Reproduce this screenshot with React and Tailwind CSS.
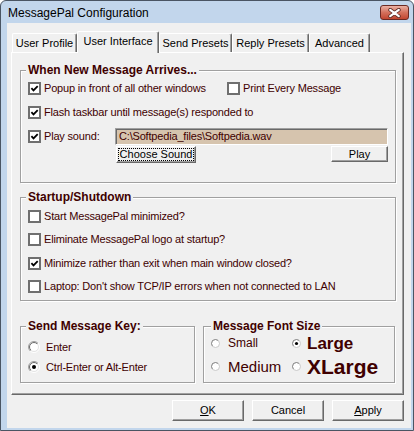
import React from "react";

const tabs = [
  { label: "User Profile", w: "w-[65px]" },
  { label: "User Interface", w: "w-[82px]", active: true },
  { label: "Send Presets", w: "w-[73px]" },
  { label: "Reply Presets", w: "w-[77px]" },
  { label: "Advanced", w: "w-[61px]" },
];

const CheckBox = ({ checked }) => (
  <span className="w-[13px] h-[13px] shrink-0 border-2 border-[#6f6f6f] bg-white flex items-center justify-center">
    {checked && (
      <svg width="9" height="9" viewBox="0 0 9 9">
        <path d="M1.4 4.2 L3.5 6.4 L7.7 2.1" fill="none" stroke="#000" strokeWidth="1.8" />
      </svg>
    )}
  </span>
);

const Check = ({ label, checked, className = "" }) => (
  <label className={`flex items-center gap-[3px] ${className}`}>
    <CheckBox checked={checked} />
    <span className="text-[11px] leading-[13px] tracking-[-0.18px] text-[#400000] whitespace-nowrap">{label}</span>
  </label>
);

const Radio = ({ checked }) => (
  <svg width="12" height="12" viewBox="0 0 12 12" className="shrink-0">
    <defs>
      <linearGradient id="ro" x1="0" y1="0" x2="1" y2="1">
        <stop offset="0.5" stopColor="#a0a0a0" />
        <stop offset="0.5" stopColor="#ffffff" />
      </linearGradient>
      <linearGradient id="ri" x1="0" y1="0" x2="1" y2="1">
        <stop offset="0.5" stopColor="#696969" />
        <stop offset="0.5" stopColor="#e3e3e3" />
      </linearGradient>
    </defs>
    <circle cx="6" cy="6" r="5.5" fill="none" stroke="url(#ro)" strokeWidth="1" />
    <circle cx="6" cy="6" r="4.5" fill="#fff" stroke="url(#ri)" strokeWidth="1" />
    {checked && <circle cx="6" cy="6" r="2" fill="#000" />}
  </svg>
);

// the font-size radios are drawn smaller in the original
const SmallRadio = ({ checked }) => (
  <svg width="9" height="9" viewBox="0 0 9 9" className="shrink-0">
    <defs>
      <linearGradient id="rs" x1="0" y1="0" x2="1" y2="1">
        <stop offset="0.5" stopColor="#7a7a7a" />
        <stop offset="0.5" stopColor="#c8c8c8" />
      </linearGradient>
    </defs>
    <circle cx="4.5" cy="4.5" r="4" fill="#fff" stroke="url(#rs)" strokeWidth="1" />
    {checked && <circle cx="4.5" cy="4.5" r="1.6" fill="#000" />}
  </svg>
);

const Btn = ({ children, className = "" }) => (
  <div
    className={`bg-[#f0f0f0] border border-t-white border-l-white border-b-[#696969] border-r-[#696969] shadow-[inset_-1px_-1px_0_#a0a0a0] flex items-center justify-center text-[11px] text-black ${className}`}
  >
    {children}
  </div>
);

const Group = ({ title, className = "", titleLeft = "left-[5px]", children }) => (
  <div className={`relative border border-[#a0a0a0] shadow-[inset_1px_1px_0_#fff,1px_1px_0_#fff] ${className}`}>
    <span className={`absolute top-[-8px] ${titleLeft} px-[2px] bg-[#f0f0f0] text-[12px] leading-[14px] font-bold text-[#400000] whitespace-nowrap`}>
      {title}
    </span>
    {children}
  </div>
);

const CloseButton = () => (
  <div className="mt-[4px] mr-[2px] w-[29px] h-[15px] rounded-[3px] border border-[#6b2a23] bg-linear-to-b from-[#eab0a4] via-[#d3705c] to-[#c2452f] flex items-center justify-center">
    <svg width="13" height="10" viewBox="0 0 13 10">
      <path d="M2.2 1.8 L10.8 8.2 M10.8 1.8 L2.2 8.2" stroke="#5a2a25" strokeWidth="3.8" strokeLinecap="round" />
      <path d="M2.2 1.8 L10.8 8.2 M10.8 1.8 L2.2 8.2" stroke="#fff" strokeWidth="2.2" strokeLinecap="round" />
    </svg>
  </div>
);

export default function App() {
  return (
    <div className="w-[414px] h-[431px] bg-white">
      <div className="w-[414px] h-[431px] flex flex-col border border-[#4a5563] rounded-t-[6px] bg-[#c2d6ec] pl-[6px] pr-[2px] pb-[2px] font-['Liberation_Sans',Arial,sans-serif]">
        <div className="h-[22px] shrink-0 flex items-start justify-between">
          <span className="mt-[5px] ml-[1px] text-[12px] leading-[15px] text-black">MessagePal Configuration</span>
          <CloseButton />
        </div>

        <div className="flex-1 bg-[#f0f0f0] flex flex-col pt-[8px]">
          {/* tabs */}
          <div className="h-[21px] flex items-end pl-[5px]">
            {tabs.map((t) =>
              t.active ? (
                <div
                  key={t.label}
                  className={`${t.w} h-[22px] -mb-[1px] relative z-10 bg-[#f0f0f0] border-t border-l border-white border-r border-r-[#696969] shadow-[inset_-1px_0_0_#a0a0a0] rounded-t-[2px] flex justify-center pt-[3px] text-[11px] leading-[13px] text-black`}
                >
                  {t.label}
                </div>
              ) : (
                <div
                  key={t.label}
                  className={`${t.w} h-[19px] border-t border-l border-white border-r border-r-[#696969] shadow-[inset_-1px_0_0_#a0a0a0] rounded-t-[2px] flex justify-center pt-[3px] text-[11px] leading-[13px] text-black`}
                >
                  {t.label}
                </div>
              )
            )}
          </div>

          {/* tab page */}
          <div className="ml-[4px] w-[393px] h-[343px] border border-white border-r-[#696969] border-b-[#696969] shadow-[inset_-1px_-1px_0_#a0a0a0] pl-[8px] flex flex-col">
            <Group title="When New Message Arrives..." className="w-[376px] h-[113px] mt-[17px] pt-[5px] pl-[7px]">
              <div className="h-[24px] flex items-center">
                <Check label="Popup in front of all other windows" checked className="w-[199px]" />
                <Check label="Print Every Message" />
              </div>
              <div className="h-[24px] flex items-center">
                <Check label="Flash taskbar until message(s) responded to" checked />
              </div>
              <div className="mt-[4px] flex items-start">
                <div className="w-[87px] h-[17px] flex items-center">
                  <Check label="Play sound:" checked />
                </div>
                <div className="w-[273px] flex flex-col">
                  <div className="h-[17px] bg-[#d6c4ae] border border-t-[#a0a0a0] border-l-[#a0a0a0] border-b-white border-r-white shadow-[inset_1px_1px_0_#696969] flex items-center pl-[3px] text-[11px] leading-[13px] tracking-[-0.18px] text-[#400000] whitespace-nowrap">
                    C:\Softpedia_files\Softpedia.wav
                  </div>
                  <div className="mt-[1px] flex items-start">
                    <Btn className="ml-[1px] w-[80px] h-[17px] p-[1px]">
                      <span className="self-stretch flex-1 border border-dotted border-black flex items-center justify-center leading-[11px]">
                        Choose Sound
                      </span>
                    </Btn>
                    <Btn className="ml-auto w-[57px] h-[16px]">Play</Btn>
                  </div>
                </div>
              </div>
            </Group>

            <Group title="Startup/Shutdown" className="w-[376px] h-[104px] mt-[14px] pt-[7px] pl-[7px]">
              <div className="h-[23px] flex items-center">
                <Check label="Start MessagePal minimized?" />
              </div>
              <div className="h-[23px] flex items-center">
                <Check label="Eliminate MessagePal logo at startup?" />
              </div>
              <div className="h-[24px] flex items-center">
                <Check label="Minimize rather than exit when main window closed?" checked />
              </div>
              <div className="h-[23px] flex items-center">
                <Check label="Laptop: Don't show TCP/IP errors when not connected to LAN" />
              </div>
            </Group>

            <div className="mt-[25px] flex gap-[8px]">
              <Group title="Send Message Key:" className="w-[175px] h-[57px] pt-[10px] pl-[7px]">
                <div className="h-[20px] flex items-center gap-[6px]">
                  <Radio />
                  <span className="text-[11px] leading-[13px] tracking-[-0.18px] text-[#400000]">Enter</span>
                </div>
                <div className="h-[20px] flex items-center gap-[6px]">
                  <Radio checked />
                  <span className="text-[11px] leading-[13px] tracking-[-0.18px] text-[#400000]">Ctrl-Enter or Alt-Enter</span>
                </div>
              </Group>

              <Group title="Message Font Size" titleLeft="left-[7px]" className="w-[192px] h-[57px] pt-[5px] pl-[7px]">
                <div className="h-[22px] flex items-center">
                  <div className="w-[81px] flex items-center gap-[8px]">
                    <SmallRadio />
                    <span className="text-[12px] leading-none text-[#400000]">Small</span>
                  </div>
                  <div className="flex items-center gap-[6px]">
                    <SmallRadio checked />
                    <span className="text-[17px] leading-none font-bold text-[#400000]">Large</span>
                  </div>
                </div>
                <div className="h-[25px] flex items-center">
                  <div className="w-[81px] flex items-center gap-[8px]">
                    <SmallRadio />
                    <span className="text-[15px] leading-none text-[#400000]">Medium</span>
                  </div>
                  <div className="flex items-center gap-[6px]">
                    <SmallRadio />
                    <span className="text-[21px] leading-none font-bold text-[#400000]">XLarge</span>
                  </div>
                </div>
              </Group>
            </div>
          </div>

          {/* dialog buttons */}
          <div className="mt-[5px] flex justify-end gap-[8px] pr-[7px]">
            <Btn className="w-[72px] h-[21px]">
              <span><span className="underline underline-offset-[1px]">O</span>K</span>
            </Btn>
            <Btn className="w-[72px] h-[21px]">Cancel</Btn>
            <Btn className="w-[72px] h-[21px]">
              <span><span className="underline underline-offset-[1px]">A</span>pply</span>
            </Btn>
          </div>
        </div>
      </div>
    </div>
  );
}
